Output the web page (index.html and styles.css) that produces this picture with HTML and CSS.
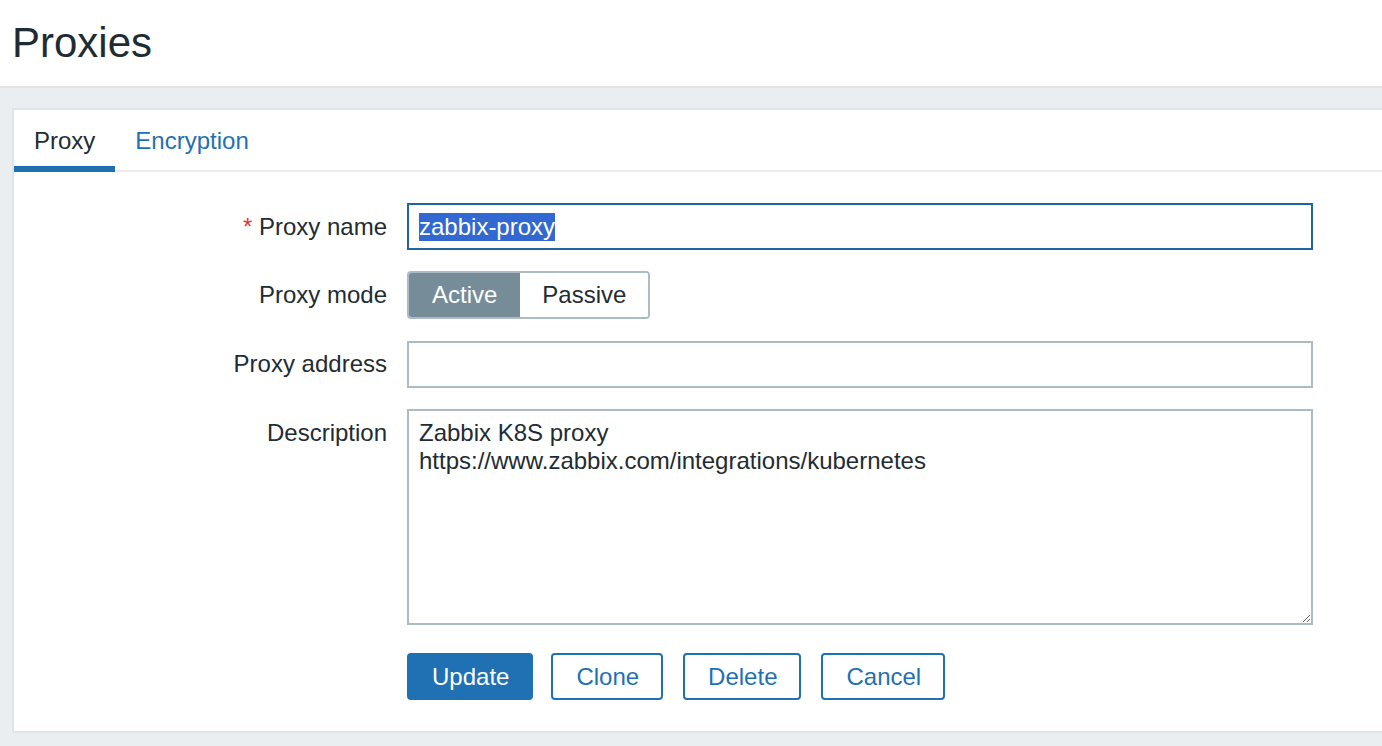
FILE: index.html
```html
<!DOCTYPE html>
<html lang="en">
<head>
<meta charset="utf-8">
<title>Proxies</title>
<link rel="stylesheet" href="styles.css">
</head>
<body>
<div class="page">
  <header class="header">
    <h1 class="title">Proxies</h1>
  </header>
  <main class="content">
    <section class="card">
      <ul class="tabs">
        <li class="tab tab-active">Proxy</li>
        <li class="tab">Encryption</li>
      </ul>
      <form class="form">
        <label class="label"><span class="req">*</span> Proxy name</label>
        <div class="field">
          <div class="input input-focus"><span class="sel">zabbix-proxy</span></div>
        </div>

        <label class="label">Proxy mode</label>
        <div class="field">
          <div class="radio-group">
            <span class="radio radio-on">Active</span>
            <span class="radio">Passive</span>
          </div>
        </div>

        <label class="label">Proxy address</label>
        <div class="field field-addr">
          <div class="input"></div>
        </div>

        <label class="label label-top">Description</label>
        <div class="field">
          <textarea class="textarea">Zabbix K8S proxy
https://www.zabbix.com/integrations/kubernetes</textarea>
        </div>

        <div class="spacer"></div>
        <div class="buttons">
          <button type="button" class="btn btn-primary">Update</button>
          <button type="button" class="btn">Clone</button>
          <button type="button" class="btn">Delete</button>
          <button type="button" class="btn">Cancel</button>
        </div>
      </form>
    </section>
  </main>
</div>
</body>
</html>
```
FILE: styles.css
```css
html, body {
  margin: 0;
  padding: 0;
  height: 100%;
  overflow: hidden;
}
body {
  font-family: "Liberation Sans", Arial, sans-serif;
  font-size: 24px;
  color: #1f2c33;
  background: #ebeef0;
}
.page {
  width: 100%;
  overflow: hidden;
}
.header {
  background: #fff;
  height: 86px;
  border-bottom: 2px solid #dfe4e7;
  display: flex;
  align-items: center;
  padding-left: 12px;
}
.title {
  margin: 0;
  font-size: 42px;
  font-weight: normal;
  line-height: 48px;
  color: #1f2c33;
}
.content {
  padding: 20px 0 0 12px;
}
.card {
  background: #fff;
  border: 2px solid #dfe4e7;
  width: calc(100% + 40px);
  box-sizing: border-box;
  padding-bottom: 31px;
}
.tabs {
  list-style: none;
  margin: 0;
  padding: 0;
  display: flex;
  height: 60px;
  border-bottom: 2px solid #e8ecee;
}
.tab {
  padding: 17px 20px 11px;
  line-height: 28px;
  height: 62px;
  box-sizing: border-box;
  color: #1f71b3;
  border-bottom: 6px solid transparent;
}
.tab-active {
  color: #1f2c33;
  border-bottom-color: #1f71b3;
}
.form {
  display: grid;
  grid-template-columns: 373px 906px;
  column-gap: 20px;
  row-gap: 21px;
  padding-top: 31px;
  align-items: center;
}
.label {
  text-align: right;
  line-height: 28px;
  white-space: nowrap;
}
.label-top {
  align-self: start;
  padding-top: 10px;
}
.req {
  color: #e33734;
}
.field-addr {
  padding-top: 1px;
}
.input {
  height: 47px;
  box-sizing: border-box;
  border: 2px solid #acbbc4;
  padding: 0 10px;
  line-height: 28px;
  display: flex;
  align-items: center;
  background: #fff;
}
.input-focus {
  border-color: #1f65a0;
}
.sel {
  background: #3268d1;
  color: #fff;
  line-height: 28px;
}
.radio-group {
  display: inline-flex;
  height: 48px;
  box-sizing: border-box;
  border: 2px solid #acbbc4;
  border-radius: 4px;
  overflow: hidden;
}
.radio {
  display: flex;
  align-items: center;
  padding: 0 22px;
  line-height: 28px;
  color: #1f2c33;
  background: #fff;
}
.radio-on {
  background: #768d99;
  color: #fff;
  padding: 0 23px;
}
.textarea {
  display: block;
  width: 100%;
  height: 216px;
  box-sizing: border-box;
  border: 2px solid #acbbc4;
  border-radius: 0;
  padding: 8px 10px;
  margin: 0;
  font-family: "Liberation Sans", Arial, sans-serif;
  font-size: 24px;
  line-height: 28px;
  color: #1f2c33;
  resize: both;
  outline: none;
}
.spacer {
  height: 1px;
}
.buttons {
  display: flex;
  gap: 20px;
  margin-top: 7px;
}
.btn {
  height: 47px;
  box-sizing: border-box;
  padding: 0 22px 0 23px;
  border: 2px solid #1f71b3;
  border-radius: 4px;
  background: #fff;
  color: #1f71b3;
  font-family: "Liberation Sans", Arial, sans-serif;
  font-size: 24px;
  line-height: 28px;
  cursor: pointer;
}
.btn-primary {
  background: #1f71b3;
  color: #fff;
  margin-right: -2px;
}
```
